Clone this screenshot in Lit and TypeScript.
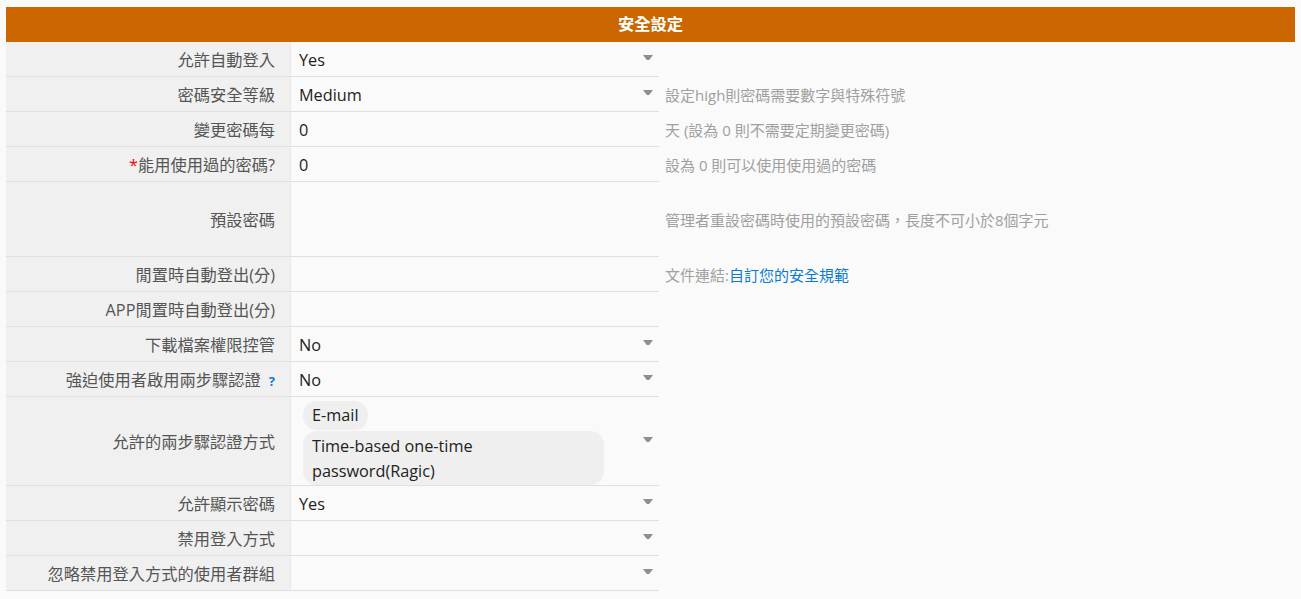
import { LitElement, html, css } from "lit";
import { customElement } from "lit/decorators.js";

type Row = { label: string; value?: string; arrow?: boolean; hint?: unknown; cls?: string; req?: boolean; q?: boolean; tags?: string[] };

const rows: Row[] = [
  { label: "允許自動登入", value: "Yes", arrow: true },
  { label: "密碼安全等級", value: "Medium", arrow: true, hint: "設定high則密碼需要數字與特殊符號" },
  { label: "變更密碼每", value: "0", hint: "天 (設為 0 則不需要定期變更密碼)" },
  { label: "能用使用過的密碼?", value: "0", req: true, hint: "設為 0 則可以使用使用過的密碼" },
  { label: "預設密碼", cls: "tall", hint: "管理者重設密碼時使用的預設密碼\uFF0C長度不可小於8個字元" },
  { label: "閒置時自動登出(分)", hint: html`文件連結:<a href="#">自訂您的安全規範</a>` },
  { label: "APP閒置時自動登出(分)" },
  { label: "下載檔案權限控管", value: "No", arrow: true },
  { label: "強迫使用者啟用兩步驟認證", value: "No", arrow: true, q: true },
  { label: "允許的兩步驟認證方式", arrow: true, cls: "multi", tags: ["E-mail", "Time-based one-time password(Ragic)"] },
  { label: "允許顯示密碼", value: "Yes", arrow: true },
  { label: "禁用登入方式", arrow: true },
  { label: "忽略禁用登入方式的使用者群組", arrow: true },
];

@customElement("app-root")
export class AppRoot extends LitElement {
  static styles = css`
    :host {
      display: block;
      height: 599px;
      overflow: hidden;
      box-sizing: border-box;
      padding: 7px 6px 0;
      background: #fafafa;
      color: #333;
      font-family: "Open Sans", "Noto Sans CJK TC", sans-serif;
      font-size: 16.25px;
    }
    .head {
      height: 35px;
      line-height: 35px;
      background: #cc6600;
      color: #fff;
      font-weight: 700;
      text-align: center;
    }
    .row {
      display: grid;
      grid-template-columns: 285px 368px 1fr;
      height: 35px;
    }
    .row.tall { height: 75px; }
    .row.multi { height: 89px; }
    .label {
      display: flex;
      align-items: center;
      justify-content: flex-end;
      padding-right: 15px;
      padding-bottom: 1px;
      box-sizing: border-box;
      background: #f0f0f0;
      border-bottom: 1px solid #e0e0e0;
      border-right: 1px solid #e8e8e8;
      white-space: nowrap;
      color: #555;
    }
    .req { color: #f00; }
    .q { color: #0a7bd0; font-size: 13px; font-weight: 700; margin-left: 8px; }
    .value {
      position: relative;
      display: flex;
      align-items: center;
      padding-left: 8px;
      padding-top: 1px;
      box-sizing: border-box;
      border-bottom: 1px solid #e0e0e0;
      color: #222;
    }
    .arrow {
      position: absolute;
      right: 6px;
      top: 13px;
      width: 10px;
      height: 5px;
      display: block;
      fill: #8f8f8f;
    }
    .multi .arrow { top: 40px; }
    .tags {
      display: flex;
      flex-direction: column;
      align-items: flex-start;
      gap: 1px;
      padding: 3px 0 0 4px;
      width: 301px;
      height: 100%;
      box-sizing: border-box;
    }
    .tag {
      background: #efefef;
      border-radius: 14px;
      padding: 2px 9px;
      line-height: 25px;
      box-sizing: border-box;
    }
    .tag.long { width: 301px; padding: 3px 9px 1px; }
    .hint {
      display: flex;
      align-items: center;
      padding-left: 6px;
      padding-bottom: 1px;
      box-sizing: border-box;
      font-size: 15px;
      color: #a0a0a0;
    }
    a { color: #0a7bd0; text-decoration: none; }
  `;

  render() {
    return html`
      <div class="head">安全設定</div>
      ${rows.map(
        (r) => html`
          <div class="row ${r.cls ?? ""}">
            <div class="label">
              <span>${r.req ? html`<span class="req">*</span>` : ""}${r.label}${r.q ? html`<span class="q">?</span>` : ""}</span>
            </div>
            <div class="value">
              ${r.tags
                ? html`<div class="tags">${r.tags.map((t) => html`<div class="tag ${t.length > 10 ? "long" : ""}">${t}</div>`)}</div>`
                : r.value ?? ""}
              ${r.arrow ? html`<svg class="arrow" viewBox="0 0 10 5"><path d="M0 0h10L6.2 5H3.8z"></path></svg>` : ""}
            </div>
            <div class="hint"><span>${r.hint ?? ""}</span></div>
          </div>
        `
      )}
    `;
  }
}
